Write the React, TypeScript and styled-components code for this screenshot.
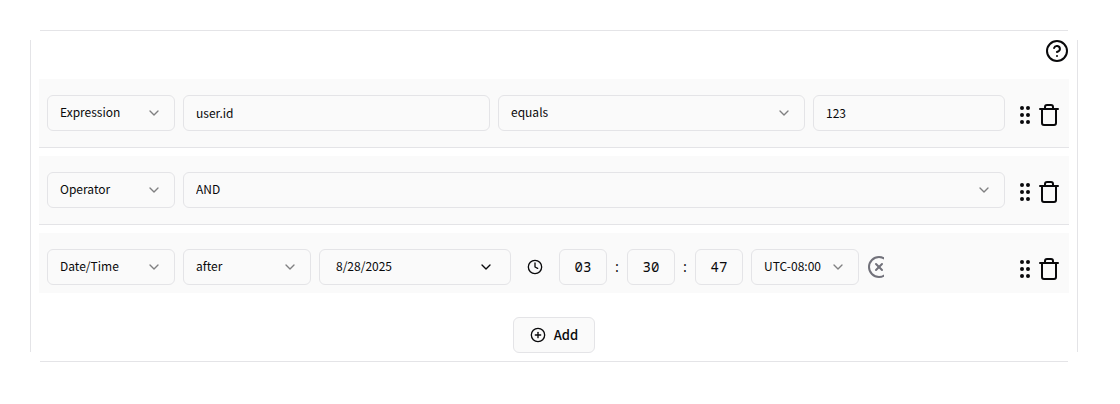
import React from "react";
import styled, { createGlobalStyle, css } from "styled-components";
import {
  ChevronDown,
  CircleHelp,
  CirclePlus,
  CircleX,
  Clock,
  GripVertical,
  Trash,
} from "lucide-react";

const sans = `"Noto Sans CJK SC", "Noto Sans", sans-serif`;
const mono = `"Noto Sans Mono", "DejaVu Sans Mono", monospace`;
const line = "#e4e4e7";

const GlobalStyle = createGlobalStyle`
  *, *::before, *::after { box-sizing: border-box; }
  body {
    margin: 0;
    background: #ffffff;
    color: #09090b;
    font: 12px/20px ${sans};
  }
  button, input, select { font: inherit; color: inherit; margin: 0; }
  svg { display: block; flex: none; }
`;

const Page = styled.main`
  padding: 30px 42px 30px 30px;
`;

/* Open-cornered frame: each edge stops short of the corner. */
const Panel = styled.section`
  display: flex;
  flex-direction: column;
  padding: 9px;
  background:
    linear-gradient(${line}, ${line}) top / calc(100% - 20px) 1px no-repeat,
    linear-gradient(${line}, ${line}) bottom / calc(100% - 20px) 1px no-repeat,
    linear-gradient(${line}, ${line}) left / 1px calc(100% - 20px) no-repeat,
    linear-gradient(${line}, ${line}) right / 1px calc(100% - 20px) no-repeat;
`;

const IconButton = styled.button<{ $muted?: boolean }>`
  display: flex;
  padding: 0;
  border: 0;
  background: none;
  color: ${(p) => (p.$muted ? "#71717a" : "#09090b")};
  cursor: pointer;
`;

const PanelHeader = styled.header`
  display: flex;
  justify-content: flex-end;
  margin-bottom: 16px;
`;

const RuleList = styled.ul`
  display: flex;
  flex-direction: column;
  gap: 8px;
  margin: 0;
  padding: 0;
  list-style: none;
`;

const Rule = styled.li`
  display: flex;
  gap: 8px;
  padding: 16px 8px;
  background: #fafafa;
  border-bottom: 1px solid ${line};

  &:last-child {
    padding-bottom: 8px;
    border-bottom: 0;
  }
`;

const Fields = styled.div<{ $columns: string }>`
  display: grid;
  grid-template-columns: 128px ${(p) => p.$columns};
  flex: 1;
  gap: 8px;
  min-width: 0;
`;

const Actions = styled.div`
  display: flex;
  align-items: center;
  padding-top: 4px;
`;

const control = css`
  height: 36px;
  border: 1px solid ${line};
  border-radius: 6px;
  background: #fafafa;
`;

const TextInput = styled.input`
  ${control}
  width: 100%;
  min-width: 0;
  padding: 0 12px 2px;
`;

const SelectBox = styled.div`
  display: grid;
  align-items: center;
  min-width: 0;

  > * { grid-area: 1 / 1; }

  > svg {
    justify-self: end;
    margin-right: 13px;
    opacity: 0.5;
    pointer-events: none;
  }
`;

const NativeSelect = styled.select`
  ${control}
  width: 100%;
  padding: 0 12px 2px;
  appearance: none;
`;

const DateButton = styled.button`
  ${control}
  display: flex;
  align-items: center;
  justify-content: space-between;
  padding: 0 16px;
`;

const Label = styled.span`
  padding-bottom: 2px;
`;

const TimeGroup = styled.div`
  display: flex;
  align-items: center;

  > svg { margin: 0 16px 0 8px; }
`;

const TimeInput = styled.input`
  ${control}
  width: 48px;
  padding: 0 0 2px;
  font-family: ${mono};
  font-size: 14px;
  text-align: center;
`;

const Colon = styled.span`
  width: 20px;
  font-family: ${mono};
  font-size: 14px;
  text-align: center;
`;

/* The clear button keeps its narrow slot, so the icon is cut at its edge. */
const ClearButton = styled(IconButton)`
  align-self: center;
  width: 17px;
  overflow: hidden;
`;

const AddButton = styled.button`
  ${control}
  display: flex;
  align-items: center;
  align-self: center;
  gap: 8px;
  margin-top: 24px;
  padding: 0 16px;
  font-size: 13px;
  font-weight: 500;
`;

type SelectProps = { label: string; value: string; options?: string[] };

function Select({ label, value, options = [] }: SelectProps) {
  return (
    <SelectBox>
      <NativeSelect aria-label={label} defaultValue={value}>
        {[value, ...options].map((o) => (
          <option key={o}>{o}</option>
        ))}
      </NativeSelect>
      <ChevronDown size={16} />
    </SelectBox>
  );
}

type RuleRowProps = { kind: string; columns: string; children: React.ReactNode };

function RuleRow({ kind, columns, children }: RuleRowProps) {
  return (
    <Rule>
      <Fields $columns={columns}>
        <Select label="Rule type" value={kind} />
        {children}
      </Fields>
      <Actions>
        <IconButton type="button" aria-label="Reorder rule">
          <GripVertical size={24} />
        </IconButton>
        <IconButton type="button" aria-label="Delete rule">
          <Trash size={24} />
        </IconButton>
      </Actions>
    </Rule>
  );
}

export default function App() {
  return (
    <>
      <GlobalStyle />
      <Page>
        <Panel>
          <PanelHeader>
            <IconButton type="button" aria-label="Help">
              <CircleHelp size={24} />
            </IconButton>
          </PanelHeader>
          <RuleList>
            <RuleRow kind="Expression" columns="1fr 1fr 192px">
              <TextInput aria-label="Expression" defaultValue="user.id" />
              <Select label="Comparison" value="equals" />
              <TextInput aria-label="Value" defaultValue="123" />
            </RuleRow>
            <RuleRow kind="Operator" columns="1fr">
              <Select label="Operator" value="AND" options={["OR"]} />
            </RuleRow>
            <RuleRow kind="Date/Time" columns="128px 192px auto 108px 1fr">
              <Select label="Date comparison" value="after" />
              <DateButton type="button">
                <Label>8/28/2025</Label>
                <ChevronDown size={16} />
              </DateButton>
              <TimeGroup>
                <Clock size={16} />
                <TimeInput aria-label="Hours" defaultValue="03" />
                <Colon>:</Colon>
                <TimeInput aria-label="Minutes" defaultValue="30" />
                <Colon>:</Colon>
                <TimeInput aria-label="Seconds" defaultValue="47" />
              </TimeGroup>
              <Select label="Time zone" value="UTC-08:00" />
              <ClearButton type="button" aria-label="Clear date" $muted>
                <CircleX size={24} />
              </ClearButton>
            </RuleRow>
          </RuleList>
          <AddButton type="button">
            <CirclePlus size={16} />
            Add
          </AddButton>
        </Panel>
      </Page>
    </>
  );
}
